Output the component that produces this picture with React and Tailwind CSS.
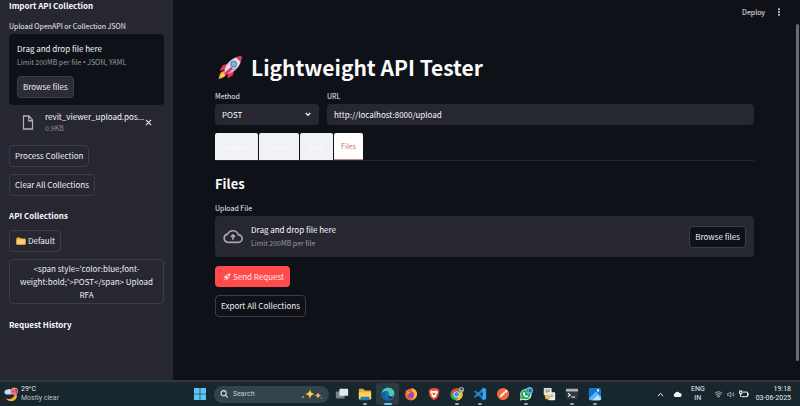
import React from "react";

const FONT = "font-['Noto_Sans_CJK_SC','Noto_Sans',sans-serif]";
const OUTLINE_BUTTON =
  "flex h-[22px] items-center rounded-[4px] border border-[#3c3d46] px-[5px] text-[8px] leading-[12px] text-[#f0f0f3]";
const SIDE_HEADING = "text-[8px] font-bold leading-[12px] text-[#fafafa]";

function Rocket({ className }) {
  return (
    <svg viewBox="0 0 32 32" className={className} aria-hidden="true">
      <path d="M13 11 6 13 2 20l8-1zM21 19l-2 7-7 4 1-8z" fill="#e9365c" />
      <path d="M4 22c3-3 8 1 6 4-2 3-6 4-9 5 0-3 1-7 3-9z" fill="#f7a331" />
      <path d="M5 24c2-1 4 1 3 3l-5 2z" fill="#ffd35a" />
      <path d="M8 21C10 11 18 2 30 2c0 12-8 20-19 22z" fill="#dcdce6" />
      <path d="M23 3c2-1 5-1 7-1 0 2 0 5-1 7z" fill="#ee2f57" />
      <path d="m11 24 10-8 5-1c-4 5-9 8-15 9z" fill="#b9b9ca" />
      <circle cx="20" cy="11.5" r="4.3" fill="#5c82b4" />
      <circle cx="20" cy="11.5" r="2.8" fill="#8db5e4" />
      <path d="m17 15-9 8 2 3 9-8z" fill="#e9365c" />
    </svg>
  );
}

function SmallRocket() {
  return (
    <svg viewBox="0 0 16 16" className="size-[8px]" aria-hidden="true">
      <path d="M4 10C5 5 9 1 15 1c0 6-4 10-9 11z" fill="#ffe3e5" />
      <path d="M7 5 3 6 1 10l4-1zM11 9l-1 4-4 2 1-4z" fill="#ffc7cc" />
      <circle cx="10" cy="6" r="2" fill="#d0637c" />
      <path d="m4 11-3 4 4-2z" fill="#ffd9b0" />
    </svg>
  );
}

function Sidebar() {
  return (
    <aside className="flex w-[173px] shrink-0 flex-col items-start overflow-hidden bg-[#262730] px-[9px]">
      <h2 className={SIDE_HEADING}>Import API Collection</h2>
      <label htmlFor="collection" className="mt-2 text-[7px] leading-[12px] text-[#f0f0f3]">
        Upload OpenAPI or Collection JSON
      </label>
      <input id="collection" type="file" className="hidden" />
      <section className="mt-[2px] flex h-[71px] w-full flex-col items-start rounded-[4px] bg-[#0e1117] px-2 pt-[9px]">
        <p className="text-[8px] leading-[12px] text-[#fafafa]">Drag and drop file here</p>
        <p className="mt-px text-[7px] leading-[12px] text-[#9a9ba1]">
          Limit 200MB per file <span className="font-['Noto_Sans',sans-serif]">•</span> JSON, YAML
        </p>
        <button className={OUTLINE_BUTTON + " mt-[7px] bg-[#2b2c36]"}>Browse files</button>
      </section>
      <div className="mt-[6px] flex w-full items-center pl-[13px] pr-[12px]">
        <svg viewBox="0 0 24 24" className="mr-[11px] h-[15px] w-[12px] shrink-0" fill="none" stroke="#b2b3b9" strokeWidth="2.4" preserveAspectRatio="none" aria-hidden="true">
          <path d="M3 1.5h11l7 6.5v14.5H3zM13.500 1.500V9H21" />
        </svg>
        <div className="flex-1 whitespace-nowrap">
          <p className="text-[8px] leading-[12px] text-[#fafafa]">revit_viewer_upload.pos...</p>
          <p className="text-[7px] leading-[10px] text-[#8c8d94]">0.9KB</p>
        </div>
        <button aria-label="Remove file" className="ml-px shrink-0">
          <svg viewBox="0 0 8 8" className="size-[7px]" stroke="#e8e8ec" strokeWidth="1.300">
            <path d="m1 1 6 6M7 1 1 7" />
          </svg>
        </button>
      </div>
      <button className={OUTLINE_BUTTON + " mt-3"}>Process Collection</button>
      <button className={OUTLINE_BUTTON + " mt-[7px]"}>Clear All Collections</button>
      <h2 className={SIDE_HEADING + " mt-[14px]"}>API Collections</h2>
      <button className={OUTLINE_BUTTON + " mt-2 gap-[2px]"}>
        <svg viewBox="0 0 20 16" className="ml-px h-[8px] w-[10px]" aria-hidden="true">
          <path d="M1 2q0-1 1-1h6l2 2h8q1 0 1 1v11H1z" fill="#e9b344" />
          <path d="M1 5h18v9q0 1-1 1H2q-1 0-1-1z" fill="#fbcf6b" />
        </svg>
        Default
      </button>
      <button className="mt-[7px] w-full rounded-[4px] border border-[#3c3d46] px-[6px] py-[2px] text-center text-[8px] leading-[13px] text-[#f0f0f3]">
        {"<span style='color:blue;font-weight:bold;'>POST</span> Upload RFA"}
      </button>
      <h2 className={SIDE_HEADING + " mt-[15px]"}>Request History</h2>
    </aside>
  );
}

function Main() {
  const faded = "h-full rounded-t-[2px] bg-[#f0f2f6] px-2 text-[#fafafc]";
  return (
    <main className="flex min-w-0 flex-1 flex-col bg-[#0e1117]">
      <header className="flex h-[24px] shrink-0 items-center justify-end gap-3 pr-[15px]">
        <button className="text-[7px] leading-[12px] text-[#f0f0f3]">Deploy</button>
        <button aria-label="Menu">
          <svg viewBox="0 0 4 10" className="h-[8px] w-[4px]" fill="#e8e8ec">
            <circle cx="2" cy="1.500" r="1.200" />
            <circle cx="2" cy="5" r="1.200" />
            <circle cx="2" cy="8.500" r="1.200" />
          </svg>
        </button>
      </header>
      <div className="flex flex-col items-start px-[42px] pt-[28px]">
        <h1 className="flex items-center gap-2 text-[21px] font-bold leading-[30px] text-[#fafafa]">
          <Rocket className="ml-[3px] size-[25px]" />
          Lightweight API Tester
        </h1>
        <div className="mt-2 flex w-full gap-2">
          <div className="w-[104px]">
            <label htmlFor="method" className="block text-[7px] leading-[12px] text-[#f0f0f3]">Method</label>
            <div className="relative mt-[2px]">
              <select id="method" className="block h-[21px] w-full appearance-none rounded-[4px] bg-[#262730] px-[7px] text-[8px] leading-[12px] text-[#fafafa]">
                <option>POST</option>
              </select>
              <svg viewBox="0 0 8 6" className="pointer-events-none absolute right-2 top-2 h-[5px] w-[6px]" fill="none" stroke="#f0f0f3" strokeWidth="1.800">
                <path d="m1 1 3 3 3-3" />
              </svg>
            </div>
          </div>
          <div className="flex-1">
            <label htmlFor="url" className="block text-[7px] leading-[12px] text-[#f0f0f3]">URL</label>
            <input id="url" defaultValue="http://localhost:8000/upload" className="mt-[2px] block h-[21px] w-full rounded-[4px] bg-[#262730] px-[7px] text-[8px] leading-[12px] text-[#fafafa]" />
          </div>
        </div>
        <div role="tablist" className="mt-2 flex h-[28px] w-full gap-px border-b border-[#262730] text-[7px] leading-[12px]">
          <button role="tab" className={faded}>Headers</button>
          <button role="tab" className={faded}>Params</button>
          <button role="tab" className={faded}>Body</button>
          <button role="tab" aria-selected="true" className="h-full rounded-t-[2px] border-b border-[#c9888c] bg-white px-[7px] text-[#cf6d6d]">Files</button>
        </div>
        <h2 className="mt-[13px] text-[13px] font-bold leading-[20px] text-[#fafafa]">Files</h2>
        <label htmlFor="upload" className="mt-2 text-[7px] leading-[12px] text-[#f0f0f3]">Upload File</label>
        <input id="upload" type="file" className="hidden" />
        <section className="mt-[2px] flex h-[41px] w-full items-center rounded-[4px] bg-[#262730] px-2">
          <svg viewBox="0 0 24 18" className="mr-2 h-[15px] w-[20px]" fill="none" stroke="#a6a7ae" strokeWidth="2" aria-hidden="true">
            <path d="M6 16a5 5 0 0 1-.5-9.900A7 7 0 0 1 18.500 7 4.500 4.500 0 0 1 18.500 16z" />
            <path d="M12 13V7.500M9.500 9.500 12 7l2.500 2.500" />
          </svg>
          <div className="flex-1">
            <p className="text-[8px] leading-[12px] text-[#fafafa]">Drag and drop file here</p>
            <p className="mt-px text-[7px] leading-[12px] text-[#9a9ba1]">Limit 200MB per file</p>
          </div>
          <button className={OUTLINE_BUTTON + " bg-[#0e1117]"}>Browse files</button>
        </section>
        <button className="mt-[9px] flex h-[21px] items-center gap-[2px] rounded-[4px] bg-[#ff4b4b] pl-2 pr-[6px] text-[8px] leading-[12px] text-[#ffe9e9]">
          <SmallRocket />
          Send Request
        </button>
        <button className={OUTLINE_BUTTON + " mt-2"}>Export All Collections</button>
      </div>
    </main>
  );
}

function TaskbarApp({ label, running, active, children }) {
  return (
    <button
      aria-label={label}
      className={
        "flex h-[22px] w-[23px] flex-col items-center justify-end gap-[2px] rounded-[3px] " +
        (active ? "bg-[#2b3a43]" : "")
      }
    >
      <svg viewBox="0 0 16 16" className="size-[14px]">
        {children}
      </svg>
      <span
        className={
          "h-[2px] rounded-full " +
          (active ? "w-[8px] bg-[#62c5ee]" : running ? "w-[4px] bg-[#9aa3a8]" : "w-[4px]")
        }
      />
    </button>
  );
}

function Taskbar() {
  return (
    <footer className="flex h-[26px] shrink-0 items-center border-t-2 border-[#33363d] bg-[#18262e] font-[Roboto,'Noto_Sans',sans-serif] text-[#e8edf0]">
      <div className="flex w-[188px] items-center gap-[2px] pl-[4px]">
        <svg viewBox="0 0 16 16" className="size-[15px]" aria-hidden="true">
          <path d="M1 7a2.500 2.500 0 0 1 2-4 3 3 0 0 1 5 1v4H2z" fill="#c5dcf5" />
          <path d="M12 6a7 7 0 0 1-10 6c2 4 8 4 10.500 1 2-2 1.500-5-.5-7z" fill="#f4a83c" />
          <circle cx="11" cy="4.500" r="4" fill="#e87a85" />
          <path d="M9 4.500h1.500M12 3.500l1-.7V6.500" stroke="#6b2030" strokeWidth="1" fill="none" />
        </svg>
        <div className="text-[7px] leading-[9px]">
          <p>29°C</p>
          <p className="text-[#b7c0c5]">Mostly clear</p>
        </div>
      </div>
      <button aria-label="Start" className="flex w-[24px] justify-center">
        <svg viewBox="0 0 12 12" className="size-[12px]" fill="#55c6f5">
          <path d="M0 0h5.700v5.700H0zM6.300 0H12v5.700H6.300zM0 6.300h5.700V12H0zM6.300 6.300H12V12H6.300z" />
        </svg>
      </button>
      <label className="ml-[2px] flex h-[17px] w-[115px] items-center gap-[5px] rounded-full bg-[#34444d] px-[6px]">
        <svg viewBox="0 0 10 10" className="size-[8px]" fill="none" stroke="#e8edf0" strokeWidth="1.300" aria-hidden="true">
          <circle cx="4.500" cy="4" r="3.200" />
          <path d="m7 6.500 2.500 3" />
        </svg>
        <input aria-label="Search" placeholder="Search" className="min-w-0 flex-1 bg-transparent text-[7px] leading-[12px] placeholder:text-[#c5ced3]" />
        <svg viewBox="0 0 22 12" className="h-[12px] w-[22px]" aria-hidden="true">
          <path d="M9 1c.7 3.500 1.500 4 5 5-3.500 1-4.300 1.500-5 5-.7-3.500-1.500-4-5-5 3.500-1 4.300-1.500 5-5z" fill="#f7d23c" />
          <path d="m17 4.500 1 2 2 1-2 1-1 2-1-2-2-1 2-1z" fill="#f2b76a" />
          <circle cx="2" cy="9" r="1.200" fill="#48a3a5" />
          <circle cx="20.500" cy="10" r=".8" fill="#4db6d0" />
        </svg>
      </label>
      <nav aria-label="Pinned apps" className="ml-px flex">
        <TaskbarApp label="Task view">
          <rect x="1" y="5" width="10" height="8" rx="1" fill="#7c8489" />
          <rect x="5" y="2" width="10" height="8" rx="1" fill="#e4e8ea" />
        </TaskbarApp>
        <TaskbarApp label="File Explorer" running>
          <path d="M1 3q0-1 1-1h4l2 2h6q1 0 1 1v9H1z" fill="#e9ac2f" />
          <path d="M1 6h14v8H1z" fill="#fcd35d" />
          <path d="M3 15v-3q0-1 1-1h8q1 0 1 1v3z" fill="#257ec0" />
        </TaskbarApp>
        <TaskbarApp label="Edge" active>
          <circle cx="8" cy="8" r="7.500" fill="#1b78c7" />
          <path d="M.7 8C1 2 7-.5 11.500 1.500c4 2 5 7 2 8.500-2 1-5 .5-4.500-1 1-2-.5-4-3-4-2.500 0-4.500 1-5.300 3z" fill="#4bc8a8" />
          <path d="M.6 8C2 4 7 4 8.500 6 5 6 4 11 8.500 13c2 1 4 .5 5.500-.5C11 17 1 16.500.6 8z" fill="#1460ad" />
          <path d="M9 9c-.5 1.500 2 3 4.800 2L12 13c-3 .5-5-2-3-4z" fill="#18262e" />
        </TaskbarApp>
        <TaskbarApp label="Firefox">
          <circle cx="8" cy="8.500" r="6.800" fill="#f2652d" />
          <path d="M9 1c4 1 6 4 6 7.500-1 4-4 6-7 6 5-2 5-8 1-10z" fill="#fdbf3a" />
          <circle cx="7.700" cy="9" r="3.500" fill="#8a4cd0" />
          <path d="M2 4c2 0 3 2 6 2-1 2-3 1.500-4 3z" fill="#f8902f" />
        </TaskbarApp>
        <TaskbarApp label="Brave">
          <path d="M5 1h6l1.500 1.500L14 3l-.5 6L11 13l-3 2-3-2-2.500-4L2 3l1.500-.5z" fill="#ee4b2b" />
          <path d="m4.500 4 3.500.7 3.500-.7 1 2-2 3 .5 1.500L8 12.500l-3-2L5.500 9l-2-3z" fill="#fff" />
          <path d="m6 6 2 1 2-1-1 3H7z" fill="#ee4b2b" />
        </TaskbarApp>
        <TaskbarApp label="Chrome" running>
          <circle cx="7.500" cy="8.500" r="7" fill="#37a853" />
          <path d="M1.500 5a7 7 0 0 1 12 0h-6a3.500 3.500 0 0 0-3 5z" fill="#e54335" />
          <path d="M13.500 5a7 7 0 0 1-6.500 10.500L10.500 10a3.500 3.500 0 0 0 0-5z" fill="#fbc116" />
          <circle cx="7.500" cy="8.500" r="3.500" fill="#fff" />
          <circle cx="7.500" cy="8.500" r="2.700" fill="#4285f4" />
          <circle cx="13" cy="3" r="3" fill="#a9a59e" />
          <circle cx="13" cy="2.300" r="1.200" fill="#3b3029" />
        </TaskbarApp>
        <TaskbarApp label="Visual Studio Code" running>
          <path d="m1 5 1.500-1.200L12 11v4.500z" fill="#1d79bd" />
          <path d="M1 11 12 .5V5l-9.500 7.200z" fill="#2489ca" />
          <path d="M11 .5 15 2.300v11.400l-4 1.800z" fill="#3ba4ef" />
        </TaskbarApp>
        <TaskbarApp label="Postman">
          <circle cx="8" cy="8" r="7" fill="#f4693b" />
          <path d="m4 12 1-2.500L9.500 5l1.500 1.500L6.500 11zM10 5a1.600 1.600 0 1 1 1.500 1.500" fill="#fff" />
        </TaskbarApp>
        <TaskbarApp label="WhatsApp" running>
          <path d="M1 15.500 2 11.500a6.500 6.500 0 1 1 3 3z" fill="#e9f6ed" />
          <path d="M2.200 14.300 3 11.500a5.500 5.500 0 1 1 2.300 2z" fill="#1fae55" />
          <path d="M6 5.500 7 7.500l-.5 1 2 2 1-.7 1.500 1c-2 2.500-7-.5-6.500-4z" fill="#fff" />
          <circle cx="12" cy="4" r="4" fill="#58b9e9" />
          <path d="M10 2.500v3M12 2.500h1.700v3H12zM12 4h1.700" stroke="#173a52" strokeWidth=".8" fill="none" />
        </TaskbarApp>
        <TaskbarApp label="Documents">
          <rect x="2" y="1" width="9" height="8" rx="1" fill="#e5e3d8" />
          <path d="M4 3.500h5M4 5.500h5" stroke="#7c7a6c" />
          <rect x="7" y="6" width="8" height="9" rx="1" fill="#f3f1e7" />
          <path d="M3 9h6v5H4z" fill="#d9c06a" />
          <path d="M9 9h4M9 11h4" stroke="#999684" />
        </TaskbarApp>
        <TaskbarApp label="Terminal" running>
          <rect x="1" y="2" width="14" height="12" rx="1.500" fill="#32373b" />
          <path d="M1 5V3q0-1 1-1h12q1 0 1 1v2z" fill="#aeb3b6" />
          <path d="m3.500 7 2.500 2-2.500 2M7.500 11.500h4" stroke="#fff" strokeWidth="1.200" fill="none" />
        </TaskbarApp>
        <TaskbarApp label="Photos" running>
          <rect x="1" y="1" width="14" height="14" rx="2" fill="#1873d1" />
          <path d="m1 13 8-8 6 6v2q0 2-2 2H3q-2 0-2-2z" fill="#56b9f2" />
          <path d="m5 15 6-6 4 4q0 2-2 2z" fill="#bce5fb" />
          <circle cx="11.500" cy="4" r="1.300" fill="#fff" />
        </TaskbarApp>
      </nav>
      <div className="ml-auto flex items-center pr-[9px] text-[7px] leading-[9px]">
        <svg viewBox="0 0 8 6" className="mr-[9px] h-[5px] w-[7px]" fill="none" stroke="#e8edf0" strokeWidth="1.200">
          <path d="m1 5 3-3.500L7 5" />
        </svg>
        <svg viewBox="0 0 14 9" className="mr-[9px] h-[6px] w-[9px]" fill="#f2f4f5">
          <path d="M3 9a3 3 0 0 1 0-5.500 4 4 0 0 1 7-.5 3 3 0 0 1 1 6z" />
        </svg>
        <p className="mr-[9px] text-center">ENG<br />IN</p>
        <svg viewBox="0 0 12 10" className="mr-[4px] h-[7px] w-[9px]" fill="none" stroke="#d7dde0" strokeWidth="1.200">
          <path d="M.7 3.500c3-3 7.500-3 10.600 0M2.500 5.500c2-2 5-2 7 0M4.300 7.300c1-1 2.400-1 3.400 0L6 9z" />
        </svg>
        <svg viewBox="0 0 12 10" className="mr-[4px] h-[7px] w-[8px]" fill="none" stroke="#b9c1c5" strokeWidth="1.100">
          <path d="M1 3.500h2L5.500 1v8L3 6.500H1zM7.500 3.500q1 1.500 0 3M9.500 2q2 3 0 6" />
        </svg>
        <svg viewBox="0 0 13 10" className="mr-[7px] h-[8px] w-[10px]" fill="none" stroke="#f2f4f5" strokeWidth="1.300">
          <path d="M5 2.500h6v6H3.500M12 4v3" />
          <path d="M1 0v2M3.500 0v2M.5 2h3.500v2.500H.5zM2.200 4.500V9" />
        </svg>
        <p className="text-right">19:18<br />03-06-2025</p>
      </div>
    </footer>
  );
}

export default function App() {
  return (
    <div className={"flex h-screen flex-col overflow-hidden bg-[#0e1117] " + FONT}>
      <div className="flex min-h-0 flex-1">
        <Sidebar />
        <Main />
        <div className="w-[4px] shrink-0 bg-[#0e1117] pb-[19px] pt-[24px]">
          <div className="h-full w-[3px] rounded-full bg-[#6b6b6d]" />
        </div>
      </div>
      <Taskbar />
    </div>
  );
}
